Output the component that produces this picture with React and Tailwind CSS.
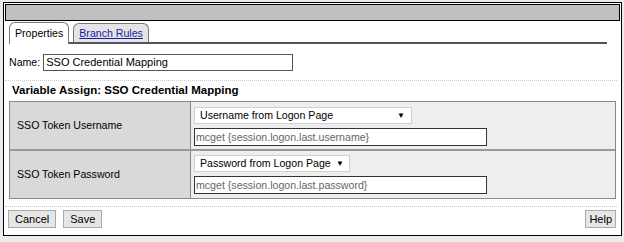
export default function App() {
  return (
    <div className="w-[624px] h-[242px] bg-[#ececec] pl-[3px] pt-[2px] overflow-hidden font-['Liberation_Sans',sans-serif] text-[10.6px] text-black">
      <div className="w-[619px] h-[234px] border border-black bg-white flex flex-col">
        {/* title bar */}
        <div className="mx-[1px] mt-[1px] h-[17px] border border-black bg-[#c0c0c0]" />

        {/* tabs */}
        <div className="flex items-end ml-[5px] mr-[14px] mt-[3px] h-[20px] border-b-2 border-[#555]">
          <div className="h-[22px] px-[5px] pt-[3px] border border-b-0 border-[#777] rounded-t-[6px] bg-white -mb-[2px] whitespace-nowrap">
            Properties
          </div>
          <div className="ml-[4px] h-[19px] px-[5px] pt-[2px] border border-b-0 border-[#777] rounded-t-[6px] bg-[#e4e4e4] whitespace-nowrap">
            <span className="text-[#1a1aa6] underline">Branch Rules</span>
          </div>
        </div>

        {/* name row */}
        <div className="flex items-center ml-[5px] mt-[10px] h-[17px]">
          <span>Name:</span>
          <div className="ml-[3px] w-[250px] h-[17px] border border-[#555] px-[2px] leading-[15px] text-[11px]">
            SSO Credential Mapping
          </div>
        </div>

        <div className="mx-[1px] mr-[4px] mt-[9px] border-t border-dotted border-[#c8c8c8]" />

        <div className="ml-[8px] mt-[2px] font-bold text-[11.5px] leading-[14px]">
          Variable Assign: SSO Credential Mapping
        </div>

        {/* table */}
        <div className="ml-[5px] mr-[5px] mt-[4px] border border-[#888] bg-[#eeeeee]">
          <div className="flex h-[49px] border-b-2 border-[#999]">
            <div className="w-[181px] shrink-0 bg-[#d9d9d9] border-r border-[#888] flex items-center pl-[7px]">
              SSO Token Username
            </div>
            <div className="flex flex-col gap-[4px] pl-[3px] pt-[5px]">
              <div className="w-[218px] h-[17px] bg-white border border-[#d0d0d0] flex items-center justify-between pl-[5px] pr-[6px] whitespace-nowrap">
                <span>Username from Logon Page</span>
                <span className="text-[8px]">▼</span>
              </div>
              <div className="w-[293px] h-[18px] bg-white border border-[#333] pl-[1px] text-[#666] leading-[16px] whitespace-nowrap">
                mcget {"{session.logon.last.username}"}
              </div>
            </div>
          </div>
          <div className="flex h-[47px]">
            <div className="w-[181px] shrink-0 bg-[#d9d9d9] border-r border-[#888] flex items-center pl-[7px]">
              SSO Token Password
            </div>
            <div className="flex flex-col gap-[4px] pl-[3px] pt-[4px]">
              <div className="w-[156px] h-[17px] bg-white border border-[#d0d0d0] flex items-center justify-between pl-[5px] pr-[5px] whitespace-nowrap">
                <span>Password from Logon Page</span>
                <span className="text-[8px]">▼</span>
              </div>
              <div className="w-[293px] h-[18px] bg-white border border-[#333] pl-[1px] text-[#666] leading-[16px] whitespace-nowrap">
                mcget {"{session.logon.last.password}"}
              </div>
            </div>
          </div>
        </div>

        <div className="mx-[1px] mr-[4px] mt-[7px] border-t border-dotted border-[#c8c8c8]" />

        {/* buttons */}
        <div className="flex ml-[4px] mr-[5px] mt-[3px]">
          <button className="h-[18px] px-[6px] bg-[#e6e6e6] border border-[#aaa] leading-[14px] text-[11px]">Cancel</button>
          <button className="ml-[7px] h-[18px] px-[6px] bg-[#e6e6e6] border border-[#aaa] leading-[14px] text-[11px]">Save</button>
          <button className="ml-auto h-[18px] px-[3px] bg-[#e6e6e6] border border-[#aaa] leading-[14px] text-[11px]">Help</button>
        </div>
      </div>
    </div>
  );
}
